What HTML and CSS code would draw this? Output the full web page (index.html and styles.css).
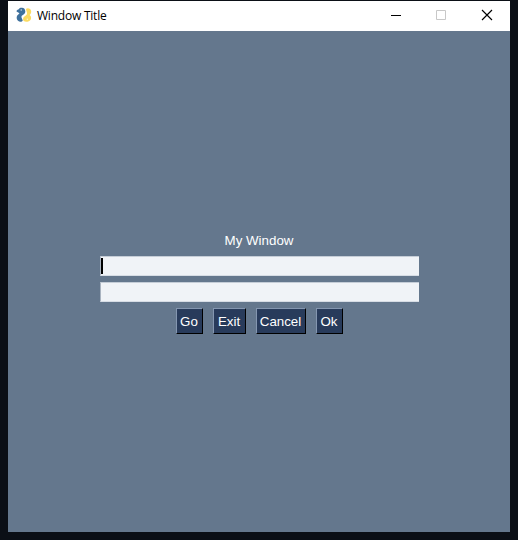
FILE: index.html
```html
<!DOCTYPE html>
<html lang="en">
<head>
<meta charset="utf-8">
<title>Window Title</title>
<link rel="stylesheet" href="styles.css">
</head>
<body>
<main class="window">
  <header class="titlebar">
    <svg class="logo" width="16" height="16" viewBox="0 0 16 16">
      <path fill="#3f719d" d="M.5 4.500C.5 3 1.800 2.500 2.800 2.200 3.500.8 4.800.5 6 .7 8 .7 9.300 2.200 9.300 4.500c0 2-1.300 2.800-2.800 3.800-1.200.8-1.300 1.700-.7 2.900l1 2.300c-.8 1.600-3.400 1.500-4.800.3C.7 12.500.3 10.500 1 9c.5-1.100 1.500-1.700 2.500-2.500L2.700 5.800z"/>
      <path fill="#fbdb62" d="M10 2c1.600-1.400 5-.4 5.200 2.400.1 1.500-.7 2.600-1.500 3.600 1.800 1.500 1.900 4 .3 5.600-1.600 1.400-4.600 1.700-6.200.5-1-.9-1-3.200.2-4.300 1-.9 2.700-1.500 3-2.800.4-1.500-1-3.300-1-5z"/>
      <circle cx="5.200" cy="3" r=".7" fill="#dfe8ee"/>
      <circle cx="11.300" cy="12.300" r=".7" fill="#fff4c8"/>
    </svg>
    <span class="title">Window Title</span>
    <div class="controls">
      <svg width="46" height="30"><path d="M19 14.500h10" stroke="#000"/></svg>
      <svg width="46" height="30"><path d="M18.500 9.500h9v9h-9z" stroke="#c8c8c8" fill="none"/></svg>
      <svg width="46" height="30"><path d="M18 9l10 10M28 9l-10 10" stroke="#000" stroke-width="1.150"/></svg>
    </div>
  </header>
  <section class="content">
    <div class="label">My Window</div>
    <div class="field"><span class="caret"></span></div>
    <div class="field"></div>
    <div class="buttons">
      <button class="button short">Go</button>
      <button class="button exit">Exit</button>
      <button class="button cancel">Cancel</button>
      <button class="button short">Ok</button>
    </div>
  </section>
</main>
</body>
</html>
```
FILE: styles.css
```css
* { box-sizing: border-box; }
body {
  margin: 0;
  height: 540px;
  padding: 1px 8px 8px;
  background: #0b0f16;
  overflow: hidden;
}
.window {
  width: 502px;
  height: 531px;
  background: #64778d;
}
.titlebar {
  display: flex;
  align-items: center;
  height: 30px;
  padding-left: 8px;
  background: #fff;
}
.logo { flex: none; margin-top: -2px; }
.title {
  margin-left: 5px;
  font: 12px/16px "Open Sans", "Noto Sans", sans-serif;
  letter-spacing: -0.220px;
  color: #000;
}
.controls { display: flex; margin-left: auto; }
.content {
  display: flex;
  flex-direction: column;
  align-items: center;
  padding-top: 202px;
  font: 13.330px/16px "Liberation Sans", Arial, sans-serif;
  color: #fff;
}
.label { height: 23px; }
.field {
  width: 319px;
  height: 20px;
  margin-bottom: 6px;
  padding: 2px 1px;
  border: 1px solid;
  border-color: #c5cdd7 #d7dde5 #d7dde5 #a9b3c0;
  border-width: 1px 0 1px 1px;
  background: #f0f3f7;
}
.caret {
  display: block;
  width: 2px;
  height: 16px;
  margin: -1px 0 0 -1px;
  background: #000;
}
.buttons { display: flex; gap: 10px; }
.button {
  height: 26px;
  padding: 2px 0 0;
  border: 1px solid;
  border-color: #8496b0 #000 #000 #8496b0;
  background: #283b5b;
  color: #fff;
  font: inherit;
}
.short { width: 27px; }
.exit { width: 33px; }
.cancel { width: 50px; }
```
